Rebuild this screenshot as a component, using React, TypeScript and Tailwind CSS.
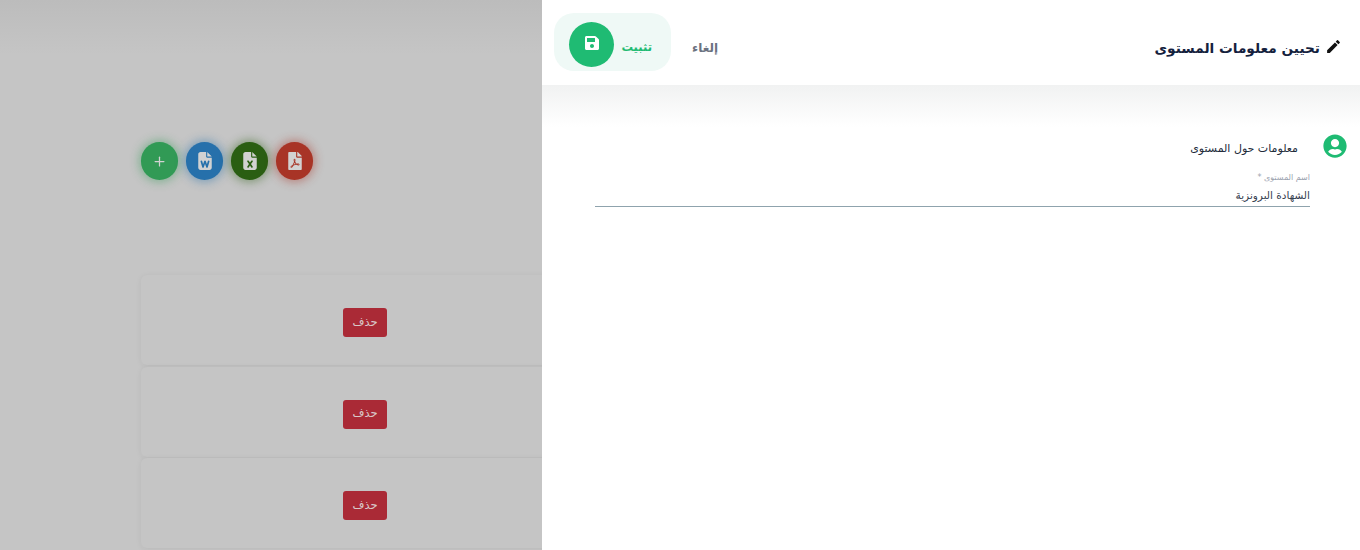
import React from 'react';
import { FaFilePdf, FaSave, FaUserCircle } from 'react-icons/fa';
import { FaFileExcel, FaFileWord } from 'react-icons/fa6';
import { MdEdit } from 'react-icons/md';
import { Plus } from 'lucide-react';

const actions = [
  { icon: Plus, size: 15, cls: 'bg-[#319a55] shadow-[0_0_10px_2px_rgba(49,154,85,0.45)]' },
  { icon: FaFileWord, size: 18, cls: 'bg-[#2670ab] shadow-[0_0_10px_2px_rgba(38,112,171,0.45)]' },
  { icon: FaFileExcel, size: 18, cls: 'bg-[#2a5e12] shadow-[0_0_10px_2px_rgba(42,94,18,0.45)]' },
  { icon: FaFilePdf, size: 18, cls: 'bg-[#a83426] shadow-[0_0_10px_2px_rgba(168,52,38,0.45)]' },
];

const rows = [1, 2, 3];

const App: React.FC = () => {
  return (
    <div className="flex h-[550px] w-[1360px] overflow-hidden font-['DejaVu_Sans',sans-serif]">
      <div className="h-full w-[542px] shrink-0 overflow-hidden bg-[#c5c5c5] bg-gradient-to-b from-[#bcbcbc] to-[#c5c5c5] bg-[length:100%_55px] bg-no-repeat pl-[141px] pt-[142px]">
        <div className="flex gap-2">
          {actions.map((a, i) => (
            <div key={i} className={`flex h-[38px] w-[37px] items-center justify-center rounded-full text-[#d2d2d2] ${a.cls}`}>
              <a.icon size={a.size} />
            </div>
          ))}
        </div>
        <div className="mt-[95px] flex w-[448px] flex-col gap-[1.5px]">
          {rows.map((r) => (
            <div key={r} className="flex h-[90px] items-center justify-center rounded-md bg-[#c5c5c5] pt-[5px] shadow-[0_1px_6px_rgba(0,0,0,0.06)]">
              <button dir="rtl" className="flex h-[29px] w-[44px] items-center justify-center rounded-[3px] bg-[#aa2a36] text-[11.5px] text-[#d8c8c8]">
                حذف
              </button>
            </div>
          ))}
        </div>
      </div>

      <div dir="rtl" className="h-full min-w-0 flex-1 bg-white">
        <div className="flex h-[85px] items-center justify-between pl-3 pr-[18px]">
          <div className="mt-[11px] flex items-center gap-[5px] text-[13.7px] font-bold text-[#14213d]">
            <MdEdit size={17} className="mb-[4px] text-[#111]" />
            <span>تحيين معلومات المستوى</span>
          </div>
          <div className="flex items-center gap-[21px]">
            <span className="mt-[11px] text-xs font-bold text-[#6b7280]">إلغاء</span>
            <div className="mb-[1px] flex h-[58px] w-[117px] items-center justify-between rounded-[20px] bg-[#eff9f6] pl-[15px] pr-[19px]">
              <span className="mt-[11px] text-[11.5px] font-bold text-[#1fbb73]">تثبيت</span>
              <div className="mt-[5px] flex h-[45px] w-[45px] items-center justify-center rounded-full bg-[#1fbb73] text-white">
                <FaSave size={16} className="mb-[4px]" />
              </div>
            </div>
          </div>
        </div>
        <div className="h-[42px] bg-gradient-to-b from-[#f1f2f2] to-white" />
        <div className="pr-[13px] pt-[7px]">
          <div className="flex h-[24px] items-center gap-[25px]">
            <FaUserCircle size={24} className="text-[#1fbb73]" />
            <span className="mt-[6px] text-[11px] text-[#222b3a]">معلومات حول المستوى</span>
          </div>
          <div className="mr-[37px] mt-[15px] w-[715px] border-b border-[#8fa3ad] pb-[4px]">
            <div className="text-[8px] leading-[10px] text-[#9ca3af]">اسم المستوى *</div>
            <div className="mt-[5px] text-[10.5px] leading-[14px] text-[#374151]">الشهادة البرونزية</div>
          </div>
        </div>
      </div>
    </div>
  );
};

export default App;
